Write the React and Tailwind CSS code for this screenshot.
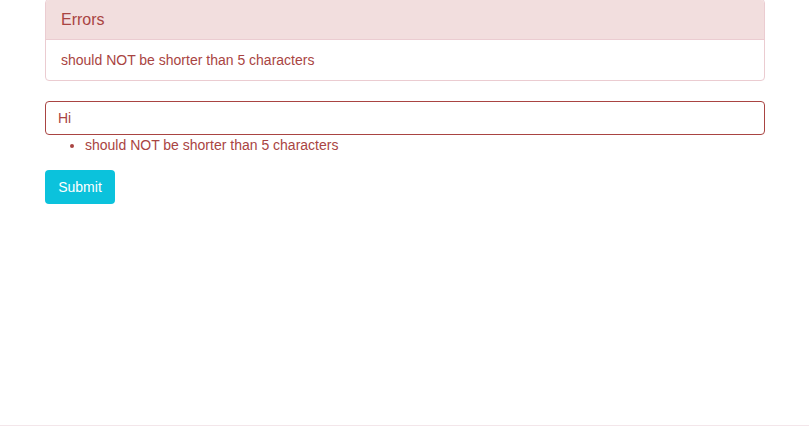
export default function App() {
  return (
    <div className="w-[809px] h-[426px] bg-white flex flex-col font-['Liberation_Sans',Arial,sans-serif] text-[14px] text-[#333]">
      <div className="flex-1 px-[45px] pr-[44px]">
        <div className="mt-[-1px] border border-[#ebccd1] rounded-[4px] bg-white">
          <div className="h-[40px] bg-[#f2dede] border-b border-[#ebccd1] rounded-t-[3px] px-[15px] flex items-center text-[16px] text-[#a94442] pt-[1px]">
            Errors
          </div>
          <div className="h-[40px] px-[15px] flex items-center text-[#a94442]">
            should NOT be shorter than 5 characters
          </div>
        </div>
        <div className="mt-[20px]">
          <div className="h-[34px] border border-[#a94442] rounded-[4px] px-[12px] flex items-center text-[#a94442]">
            Hi
          </div>
          <ul className="list-disc pl-[40px] text-[#a94442] leading-[20px]">
            <li>should NOT be shorter than 5 characters</li>
          </ul>
        </div>
        <button className="mt-[15px] w-[70px] h-[34px] rounded-[4px] bg-[#0bc2dc] text-white text-[14px] flex items-center justify-center">
          Submit
        </button>
      </div>
      <div className="h-px bg-[#f3e6ea]"></div>
    </div>
  );
}
